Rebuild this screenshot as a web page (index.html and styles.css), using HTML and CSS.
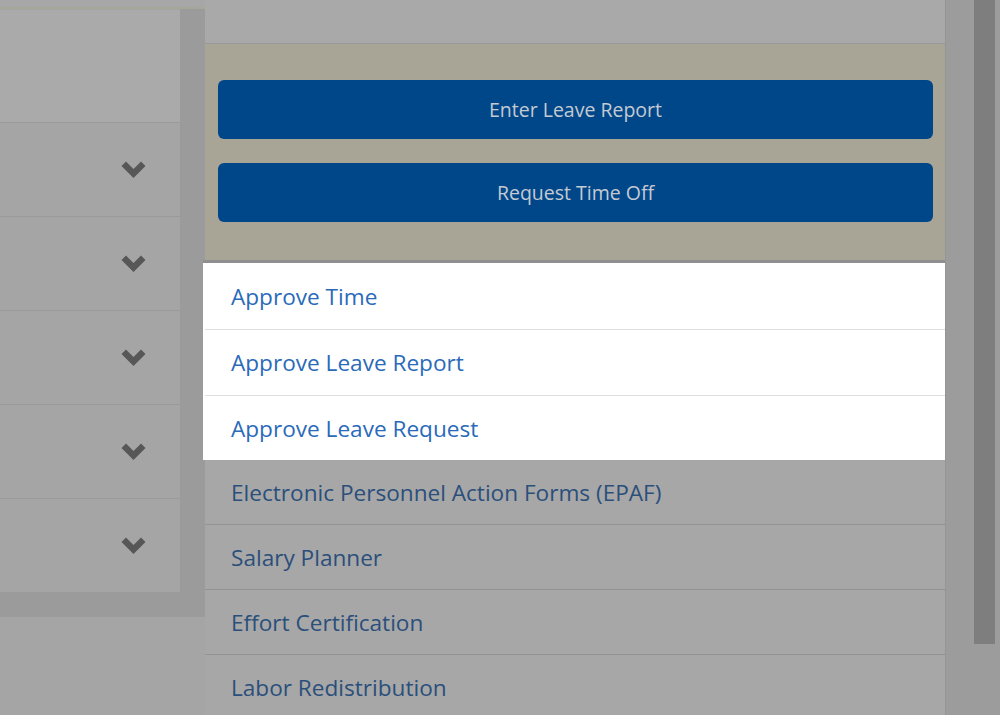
FILE: index.html
```html
<!DOCTYPE html>
<html lang="en">
<head>
  <meta charset="UTF-8">
  <title>Employee Dashboard</title>
  <link rel="stylesheet" href="styles.css">
</head>
<body>

<div class="page">
  <div class="side">
    <div class="side-panel">
      <div class="side-top"></div>
      <div class="side-box"></div>
      <div class="side-row"><svg class="chev" viewBox="0 0 24 17"><polygon points="0,5 4.5,0.5 12,8 19.5,0.5 24,5 12,17" /></svg></div>
      <div class="side-row"><svg class="chev" viewBox="0 0 24 17"><polygon points="0,5 4.5,0.5 12,8 19.5,0.5 24,5 12,17" /></svg></div>
      <div class="side-row"><svg class="chev" viewBox="0 0 24 17"><polygon points="0,5 4.5,0.5 12,8 19.5,0.5 24,5 12,17" /></svg></div>
      <div class="side-row"><svg class="chev" viewBox="0 0 24 17"><polygon points="0,5 4.5,0.5 12,8 19.5,0.5 24,5 12,17" /></svg></div>
      <div class="side-row"><svg class="chev" viewBox="0 0 24 17"><polygon points="0,5 4.5,0.5 12,8 19.5,0.5 24,5 12,17" /></svg></div>
    </div>
    <div class="side-rest"></div>
  </div>

  <div class="main">
    <div class="main-top"></div>

    <div class="actions">
      <button class="btn">Enter Leave Report</button>
      <button class="btn">Request Time Off</button>
    </div>

    <ul class="links spot">
      <li><a href="#">Approve Time</a></li>
      <li><a href="#">Approve Leave Report</a></li>
      <li><a href="#">Approve Leave Request</a></li>
    </ul>

    <ul class="links dim">
      <li><a href="#">Electronic Personnel Action Forms (EPAF)</a></li>
      <li><a href="#">Salary Planner</a></li>
      <li><a href="#">Effort Certification</a></li>
      <li><a href="#">Labor Redistribution</a></li>
    </ul>
  </div>

  <div class="scrollbar">
    <div class="thumb"></div>
  </div>
</div>

</body>
</html>
```

FILE: styles.css
```css
html, body {
  margin: 0;
  padding: 0;
  height: 100%;
  overflow: hidden;
}

body {
  background-color: #a5a5a5;
  font-family: "Open Sans", Arial, sans-serif;
}

.page {
  display: flex;
  height: 715px;
  overflow: hidden;
}

/* left column */
.side {
  width: 205px;
  flex-shrink: 0;
  display: flex;
  flex-direction: column;
}

.side-panel {
  background-color: #9b9b9b;
  padding-right: 25px;
  padding-bottom: 25px;
}

.side-top {
  height: 7px;
  background-color: #a7a7a7;
  border-bottom: 2px solid #a6a699;
  margin-right: -25px;
}

.side-box {
  height: 112px;
  background-color: #aaaaaa;
  border-top: 1px solid #a4a4a4;
}

.side-row {
  height: 93px;
  background-color: #a5a5a5;
  border-top: 1px solid #9a9a9a;
  display: flex;
  align-items: center;
  justify-content: flex-end;
  padding-right: 34px;
}

.chev {
  width: 25px;
  height: 17px;
  fill: #575757;
}

.side-rest {
  flex: 1;
  background-color: #a5a5a5;
}

/* main column */
.main {
  width: 740px;
  flex-shrink: 0;
  display: flex;
  flex-direction: column;
}

.main > * {
  flex-shrink: 0;
}

.main-top {
  height: 43px;
  background-color: #a9a9a9;
  border-bottom: 1px solid #999;
}

.actions {
  background-color: #a8a597;
  padding: 36px 12px 41px 13px;
  display: flex;
  flex-direction: column;
  gap: 24px;
}

.btn {
  height: 59px;
  background-color: #00478a;
  color: #c5cad2;
  border: none;
  border-radius: 6px;
  font-family: "Open Sans", Arial, sans-serif;
  font-size: 19.5px;
  cursor: pointer;
}

.links {
  list-style: none;
  margin: 0;
  padding: 0;
}

.links li {
  height: 64px;
  border-top: 1px solid #939393;
  display: flex;
  align-items: center;
  padding-left: 26px;
}

.links li:first-child {
  border-top: none;
}

.links a {
  font-size: 22.6px;
  text-decoration: none;
  color: #2b4f7b;
}

.spot {
  background-color: #fff;
  margin: 0 -2px;
  padding: 0 2px;
  box-shadow: 0 -3px 0 #8f8f8f;
  height: 197px;
}

.spot li {
  border-top-color: #dedede;
  height: 65px;
}

.spot li:first-child {
  height: 66px;
}

.spot a {
  color: #2a6ab9;
}

.dim {
  background-color: #a7a7a7;
}

/* scrollbar */
.scrollbar {
  flex: 1;
  background-color: #9c9c9c;
  border-left: 1px solid #959595;
  display: flex;
  justify-content: flex-end;
  padding-right: 5px;
  align-items: flex-start;
}

.thumb {
  width: 21px;
  height: 644px;
  background-color: #7e7e7e;
}
```
